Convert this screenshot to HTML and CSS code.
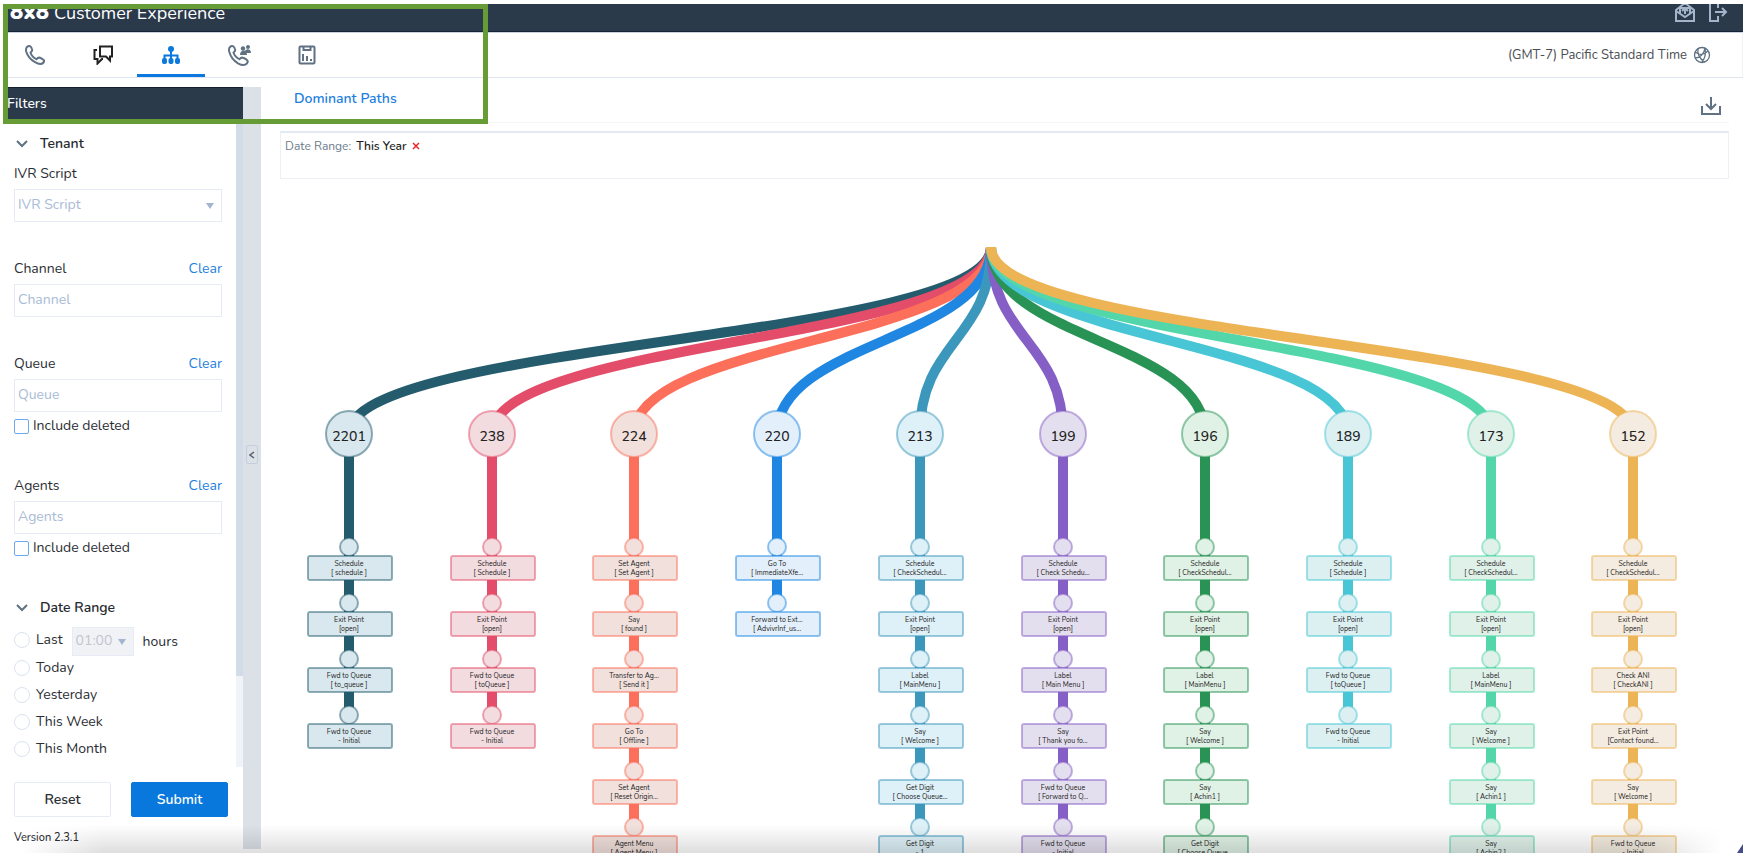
FILE: index.html
```html
<!DOCTYPE html>
<html lang="en">
<head>
  <meta charset="UTF-8">
  <meta name="viewport" content="width=device-width, initial-scale=1">
  <title>8x8 Customer Experience - Dominant Paths</title>
  <link rel="stylesheet" href="styles.css">
</head>
<body>
  <div class="app">
    <header class="topbar">
      <div class="brand"><b class="logo">8x8</b> Customer Experience</div>
      <div class="top-actions">
        <button class="icon-btn" aria-label="Messages">
          <svg width="20" height="20" viewBox="0 0 20 20"><path d="M1 8 10 1l9 7v11H1z M1 9l9 6 9-6 M5 11V6h10v5"/><path d="M10 12V7 M7 9l3-3 3 3"/></svg>
        </button>
        <button class="icon-btn" aria-label="Log out">
          <svg width="20" height="20" viewBox="0 0 20 20"><path d="M10 6V1H2v18h8v-5 M7 10h11 M14 6l4 4-4 4"/></svg>
        </button>
      </div>
    </header>

    <nav class="nav">
      <div class="nav-tabs">
        <a href="#" class="nav-tab" aria-label="Calls">
          <svg width="20" height="20" viewBox="0 0 20 20"><path d="M2 2c2-2 4-1 5 2 .8 2-.5 2.600-1.500 3.600.8 2.800 3 5.300 6 6.600 1.300-1.500 2-2 3.500-1.400 3 1.200 5.200 2.600 3.500 4.700-2 2.400-5 1.700-8.500-.3C5.500 14.500 2.300 10.500 1.200 6.500.8 4.500 1 3 2 2z"/></svg>
        </a>
        <a href="#" class="nav-tab chat" aria-label="Chats">
          <svg width="20" height="20" viewBox="0 0 20 20"><path d="M7 1.500h12v10h-2v4l-4-4H7z"/><path d="M4 5H1.500v9h3v4.500L9 14h1"/></svg>
        </a>
        <a href="#" class="nav-tab active" aria-label="IVR paths">
          <svg class="solid" width="20" height="20" viewBox="0 0 20 20"><circle cx="10" cy="4" r="3"/><rect x="1" y="13" width="5" height="6" rx="2"/><rect x="7.500" y="13" width="5" height="6" rx="2"/><rect x="14" y="13" width="5" height="6" rx="2"/><path class="line" d="M10 5v9 M3.500 14v-3.500h13V14"/></svg>
        </a>
        <a href="#" class="nav-tab" aria-label="Group calls">
          <svg width="23" height="23" viewBox="0 0 23 23"><path d="M2 3c2-2 4-1 5 2 .8 2-.5 2.600-1.500 3.600.8 2.800 3 5.300 6 6.600 1.300-1.500 2-2 3.500-1.400 3.500 1.200 6 3 4 5.500-2 2.500-5.500 2-9 0C5.500 16.500 2.300 12 1.200 7.500.8 5.500 1 4 2 3z"/><g class="people"><circle cx="20" cy="3" r="2"/><circle cx="15" cy="4.500" r="2.200"/><path d="M12 11c0-6 7-6 7 0z M16.500 9c0-5 6.500-5 6.500 0z"/></g></svg>
        </a>
        <a href="#" class="nav-tab" aria-label="Reports">
          <svg width="18" height="20" viewBox="0 0 18 20"><rect x="1.500" y="1.500" width="15" height="17" rx="1"/><path d="M5.500 2v3h7V2 M5 9v7 M9 11v5 M13 14v2"/></svg>
        </a>
      </div>
      <button class="timezone">(GMT-7) Pacific Standard Time
        <svg width="18" height="18" viewBox="0 0 18 18"><circle cx="9" cy="9" r="7.500"/><path d="M2 6c4 3 9 3 13-1 M2 12c5 0 9-4 10-10 M5 2c-1 6 2 11 7 14 M9 16c3-4 4-7 3-14"/></svg>
      </button>
    </nav>

    <div class="content">
      <aside class="sidebar">
        <h2 class="sidebar-title">Filters</h2>
        <form class="filters">
          <div class="scroll">
            <h3 class="section"><svg class="chevron" width="12" height="8" viewBox="0 0 12 8"><path d="M1 1l5 5 5-5"/></svg>Tenant</h3>
            <div class="field">
              <div class="field-head"><label for="ivr">IVR Script</label></div>
              <div class="select"><select id="ivr"><option>IVR Script</option></select></div>
            </div>
            <div class="field">
              <div class="field-head"><label for="channel">Channel</label><a href="#">Clear</a></div>
              <input type="text" id="channel" placeholder="Channel">
            </div>
            <div class="field with-check">
              <div class="field-head"><label for="queue">Queue</label><a href="#">Clear</a></div>
              <input type="text" id="queue" placeholder="Queue">
              <label class="check"><input type="checkbox">Include deleted</label>
            </div>
            <div class="field with-check">
              <div class="field-head"><label for="agents">Agents</label><a href="#">Clear</a></div>
              <input type="text" id="agents" placeholder="Agents">
              <label class="check"><input type="checkbox">Include deleted</label>
            </div>
            <h3 class="section"><svg class="chevron" width="12" height="8" viewBox="0 0 12 8"><path d="M1 1l5 5 5-5"/></svg>Date Range</h3>
            <div class="ranges">
              <div class="last-row">
                <label class="radio"><input type="radio" name="range">Last</label>
                <div class="select small"><select id="hours" disabled><option>01:00</option></select></div>
                <label for="hours">hours</label>
              </div>
              <label class="radio"><input type="radio" name="range">Today</label>
              <label class="radio"><input type="radio" name="range">Yesterday</label>
              <label class="radio"><input type="radio" name="range">This Week</label>
              <label class="radio"><input type="radio" name="range">This Month</label>
            </div>
          </div>
          <div class="scrollbar"><div class="thumb"></div></div>
        </form>
        <div class="buttons">
          <button class="btn">Reset</button>
          <button class="btn primary">Submit</button>
        </div>
        <p class="version">Version 2.3.1</p>
      </aside>

      <div class="divider">
        <button class="collapse" aria-label="Collapse filters"><svg width="6" height="8" viewBox="0 0 6 8"><path d="M5 1L1 4l4 3"/></svg></button>
      </div>

      <main class="main">
        <div class="tabs">
          <a href="#" class="tab">Dominant Paths</a>
          <button class="icon-btn download" aria-label="Download"><svg width="20" height="20" viewBox="0 0 20 20"><path d="M1 10v8h18v-8 M10 1v12 M5 8l5 5 5-5"/></svg></button>
        </div>
        <div class="applied">Date Range: <span class="value">This Year</span><button class="remove" aria-label="Remove date range"><svg width="8" height="8" viewBox="0 0 8 8"><path d="M1 1l6 6 M7 1L1 7"/></svg></button></div>
        <svg class="tree" id="tree" viewBox="0 0 1449 674"></svg>
      </main>
    </div>
    <div class="shade"></div>
    <div class="corner"></div>
  </div>
  <div class="highlight"></div>

  <script>
    const paths = [
      { count: 2201, color: "#245c6e", fill: "#d9e8ee", steps: ["Schedule|[ schedule ]", "Exit Point|[open]", "Fwd to Queue|[ to_queue ]", "Fwd to Queue|- Initial"] },
      { count: 238, color: "#e44d69", fill: "#f2dce0", steps: ["Schedule|[ Schedule ]", "Exit Point|[open]", "Fwd to Queue|[ toQueue ]", "Fwd to Queue|- Initial"] },
      { count: 224, color: "#fc6f5a", fill: "#f1e0dc", steps: ["Set Agent|[ Set Agent ]", "Say|[ found ]", "Transfer to Ag...|[ Send it ]", "Go To|[ Offline ]", "Set Agent|[ Reset Origin...", "Agent Menu|[ Agent Menu ]"] },
      { count: 220, color: "#1f87e1", fill: "#e3f0fc", steps: ["Go To|[ ImmediateXfe...", "Forward to Ext...|[ AdvivrInf_us..."] },
      { count: 213, color: "#3c97bc", fill: "#def0f8", steps: ["Schedule|[ CheckSchedul...", "Exit Point|[open]", "Label|[ MainMenu ]", "Say|[ Welcome ]", "Get Digit|[ Choose Queue...", "Get Digit|- 1"] },
      { count: 199, color: "#855fc6", fill: "#e4dfee", steps: ["Schedule|[ Check Schedu...", "Exit Point|[open]", "Label|[ Main Menu ]", "Say|[ Thank you fo...", "Fwd to Queue|[ Forward to Q...", "Fwd to Queue|- Initial"] },
      { count: 196, color: "#289355", fill: "#e0f1e5", steps: ["Schedule|[ CheckSchedul...", "Exit Point|[open]", "Label|[ MainMenu ]", "Say|[ Welcome ]", "Say|[ Achin1 ]", "Get Digit|[ Choose Queue..."] },
      { count: 189, color: "#49c6d6", fill: "#dcf0f2", steps: ["Schedule|[ Schedule ]", "Exit Point|[open]", "Fwd to Queue|[ toQueue ]", "Fwd to Queue|- Initial"] },
      { count: 173, color: "#53d7aa", fill: "#e0f1ea", steps: ["Schedule|[ CheckSchedul...", "Exit Point|[open]", "Label|[ MainMenu ]", "Say|[ Welcome ]", "Say|[ Achin1 ]", "Say|[ Achin2 ]"] },
      { count: 152, color: "#edb455", fill: "#f4ece0", steps: ["Schedule|[ CheckSchedul...", "Exit Point|[open]", "Check ANI|[ CheckANI ]", "Exit Point|[Contact found...", "Say|[ Welcome ]", "Fwd to Queue|- Initial"] }
    ];

    const rootX = 711, rootY = 68, countY = 255, firstY = 368, stepGap = 56;
    const colX = i => Math.round(69 + i * 142.7);
    let links = "", nodes = "";

    paths.forEach((p, i) => {
      const x = colX(i);
      const midY = (rootY + countY) / 2;
      const lastY = firstY + (p.steps.length - 1) * stepGap;
      links += `<path class="link" stroke="${p.color}" d="M${rootX} ${rootY}C${rootX} ${midY} ${x} ${midY} ${x} ${countY}V${lastY}"/>`;
      nodes += `<g class="node" fill="${p.fill}" stroke="${p.color}">`;
      nodes += `<circle cx="${x}" cy="${countY}" r="23"/><text class="count" x="${x}" y="${countY + 7}">${p.count}</text>`;
      p.steps.forEach((step, n) => {
        const y = firstY + n * stepGap;
        const [type, name] = step.split("|");
        nodes += `<circle cx="${x}" cy="${y}" r="9"/><rect x="${x - 41}" y="${y + 9}" width="84" height="24" rx="2"/>`;
        nodes += `<text x="${x}" y="${y + 19}">${type}</text><text x="${x}" y="${y + 28}">${name}</text>`;
      });
      nodes += "</g>";
    });
    document.getElementById("tree").innerHTML = links + nodes;
  </script>
</body>
</html>
```
FILE: styles.css
```css
* { box-sizing: border-box; }
body { margin: 0; padding: 4px 5px 5px 3px; height: 100vh; overflow: hidden; background: #fff; color: #2b2e33; font: 14px/20px Nunito, Lato, sans-serif; }
a { color: #1f7fe0; text-decoration: none; }
button, input, select { font: inherit; color: inherit; margin: 0; }
button { cursor: pointer; }
h2, h3, p { margin: 0; font-size: 14px; font-weight: 500; }
svg { fill: none; stroke: currentColor; stroke-width: 2; display: block; }

.app { position: relative; display: flex; flex-direction: column; height: 100%; overflow: hidden; }

/* header */
.topbar { display: flex; flex: none; justify-content: space-between; align-items: center; height: 28px; padding: 0 15px 11px 7px; background: #2b3a4b; border-bottom: 1px solid #14233a; color: #fff; }
.brand { display: flex; align-items: baseline; gap: 5px; font-size: 18px; white-space: nowrap; }
.logo { font-size: 22px; font-weight: 900; }
.top-actions { display: flex; gap: 13px; }
.icon-btn { padding: 0; border: 0; background: none; color: #a3b4cb; }

.nav { display: flex; flex: none; justify-content: space-between; height: 46px; padding-right: 31px; border-top: 1px solid #c9d3e0; border-bottom: 1px solid #dfe5ee; border-right: 1px solid #f0f3f8; }
.nav-tabs { display: flex; margin-left: -2px; }
.nav-tab { display: flex; align-items: center; justify-content: center; width: 68px; padding-top: 3px; border-bottom: 3px solid transparent; color: #5f7182; }
.nav-tab.chat { color: #222; }
.nav-tab.active { color: #0b78e0; border-color: #0b78e0; }
.solid, .people { fill: currentColor; stroke: none; }
.solid .line { fill: none; stroke: currentColor; }
.timezone { display: flex; align-items: center; gap: 6px; padding: 0; border: 0; background: none; color: #4a4d52; font-size: 13px; }
.timezone svg { color: #5f7182; stroke-width: 1.3; }

.content { display: flex; flex: 1; min-height: 0; padding-top: 9px; }

/* filters */
.sidebar { display: flex; flex: none; flex-direction: column; width: 240px; }
.sidebar-title { height: 32px; padding-left: 4px; line-height: 32px; background: #2b3a4b; color: #fff; border-top: 1px solid #14202f; }
.filters { display: flex; flex: 1; min-height: 0; }
.scroll { flex: 1; padding: 15px 14px 0 11px; overflow: hidden; }
.scrollbar { flex: none; width: 7px; background: #f0f3f8; }
.thumb { height: 86%; background: #d2dce9; }
.section { display: flex; align-items: center; gap: 12px; padding-left: 2px; margin-bottom: 10px; color: #26292e; font-weight: 600; }
.chevron { color: #5f7182; }
.field { margin-bottom: 37px; }
.field.with-check { margin-bottom: 40px; }
.field-head { display: flex; justify-content: space-between; margin-bottom: 5px; }
.field input[type="text"], .select select { display: block; width: 100%; height: 33px; padding: 0 3px 2px; border: 1px solid #e6ebf5; border-radius: 0; background: #fff; color: #a9bbd6; appearance: none; }
.field input::placeholder { color: #a9bbd6; opacity: 1; }
.select { position: relative; }
.select::after { content: ""; position: absolute; right: 8px; top: 14px; border: 4px solid transparent; border-top: 6px solid #a3b6d0; border-bottom: 0; }
.check { display: flex; align-items: center; gap: 4px; margin-top: 4px; }
.check input { width: 15px; height: 15px; border: 1px solid #6aabf0; border-radius: 2px; background: #fff; appearance: none; }
.radio { display: flex; align-items: center; gap: 6px; }
.radio input { width: 16px; height: 16px; border: 1px solid #dbe3f0; border-radius: 50%; background: #fff; appearance: none; }
.ranges { display: flex; flex-direction: column; gap: 7px; }
.last-row { display: flex; align-items: center; height: 23px; }
.select.small { width: 62px; margin: 4px 9px 0; }
.select.small select { height: 29px; background: #f0f2f6; color: #c1c6cf; opacity: 1; }
.select.small::after { top: 12px; }
.select.small + label { margin-top: 4px; }
.buttons { display: flex; flex: none; gap: 20px; padding: 15px 15px 0 11px; }
.btn { flex: 1; height: 35px; border: 1px solid #e6ebf5; border-radius: 2px; background: #fff; font-weight: 600; }
.btn.primary { border-color: #0878dc; background: #0878dc; color: #fff; }
.version { padding: 11px 11px 5px; font-size: 11px; }

.divider { display: flex; flex: none; align-items: center; justify-content: center; width: 18px; margin-bottom: 4px; background: #dce1e8; }
.collapse { display: flex; align-items: center; justify-content: center; width: 12px; height: 19px; margin-bottom: 27px; padding: 0; border: 1px solid #c5cedd; border-radius: 2px; background: none; }
.collapse svg { color: #55606e; stroke-width: 1.5; }

/* diagram */
.main { flex: 1; min-width: 0; padding: 0 14px 0 19px; overflow: hidden; }
.tabs { display: flex; justify-content: space-between; align-items: flex-end; height: 36px; border-bottom: 1px solid #f3f5f8; }
.tab { height: 33px; padding: 0 14px; font-weight: 600; border-bottom: 2px solid #1f7fe0; }
.download { align-self: center; margin: 2px 8px 0 0; color: #5f7182; }
.applied { display: flex; align-items: flex-start; gap: 5px; height: 48px; margin-top: 8px; padding: 3px 4px; border: 1px solid #edf1f6; border-top: 2px solid #e4eaf1; color: #6c7c8c; font-size: 12px; }
.value { color: #1d1f23; font-weight: 600; }
.remove { padding: 6px 0; border: 0; background: none; color: #e8262d; }
.remove svg { stroke-width: 1.5; }
.tree { width: 100%; height: auto; }
.link { stroke-width: 10; }
.node circle, .node rect { stroke-width: 2; stroke-opacity: 0.5; }
.node text { fill: #222; stroke: none; font-size: 7px; text-anchor: middle; }
.node .count { font-size: 14px; font-weight: 500; }

/* soft fade along the bottom edge */
.shade { position: absolute; left: 20px; right: 20px; bottom: 0; height: 28px; background: linear-gradient(transparent, rgba(0, 0, 0, 0.13)); mask-image: linear-gradient(to right, transparent, #000 80px, #000 calc(100% - 80px), transparent); pointer-events: none; }
.corner { position: absolute; right: 0; bottom: 0; border-left: 6px solid transparent; border-bottom: 9px solid #454b8c; }
.highlight { position: absolute; left: 3px; top: 4px; width: 485px; height: 120px; border: 5px solid #669c35; pointer-events: none; }
```
